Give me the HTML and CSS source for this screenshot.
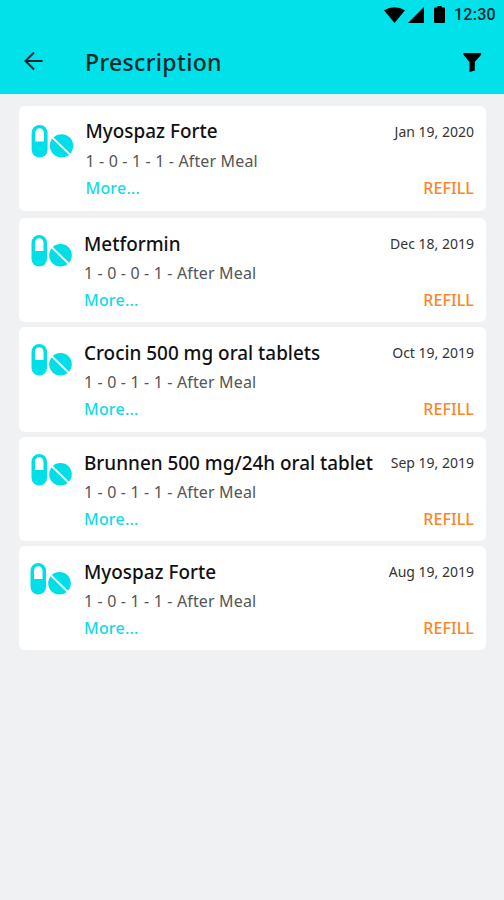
FILE: index.html
```html
<!DOCTYPE html>
<html lang="en">

<head>
    <meta charset="UTF-8" />
    <meta name="viewport" content="width=device-width, initial-scale=1.0" />
    <title>Prescription</title>
    <link rel="stylesheet" href="styles.css">
</head>

<body>
    <svg class="sprite" width="0" height="0">
        <symbol id="pills" viewBox="0 0 41 32">
            <rect x="0.5" y="0" width="15.5" height="31.500" rx="7.700" fill="#00dfe8" />
            <path d="M4 16V7.500a4.200 4.200 0 0 1 8.500 0V16z" fill="#fff" />
            <circle cx="29.500" cy="20.200" r="11.300" fill="#00dfe8" />
            <path d="M20 11.500L38.500 29.500" stroke="#fff" stroke-width="1.800" />
        </symbol>
    </svg>
    <header>
        <div class="status-bar">
            <svg class="wifi" width="21" height="16" viewBox="0 0 21 16">
                <path d="M0 3.3Q10.5-3 21 3.3L10.5 16z" />
            </svg>
            <svg class="signal" width="16" height="16" viewBox="0 0 16 16">
                <path d="M16 0v16H0z" />
            </svg>
            <svg class="battery" width="11" height="17" viewBox="0 0 11 17">
                <path d="M3.3 0h4.4v1.5H10a1 1 0 0 1 1 1V16a1 1 0 0 1-1 1H1a1 1 0 0 1-1-1V2.500a1 1 0 0 1 1-1h2.300z" />
            </svg>
            <span class="clock">12:30</span>
        </div>
        <div class="app-bar">
            <svg class="back" width="19" height="19" viewBox="0 0 19 19">
                <path d="M18.500 9H1.500M10 .5L1.500 9L10 17.500" fill="none" stroke="#07282b" stroke-width="2" />
            </svg>
            <h1>Prescription</h1>
            <svg class="filter" width="20" height="20" viewBox="0 0 20 20">
                <path d="M1.500 1h17.500q.8 1-.3 2.300L12.800 10v8.500L7.500 20V10L1.800 3.300Q.7 2 1.500 1z" />
            </svg>
        </div>
    </header>
    <main class="list">
        <article class="card first">
            <svg class="pills"><use href="#pills" /></svg>
            <div class="info">
                <h2>Myospaz Forte</h2>
                <p class="dose">1 - 0 - 1 - 1 - After Meal</p>
                <a class="more">More...</a>
            </div>
            <div class="side">
                <time>Jan 19, 2020</time>
                <a class="refill">REFILL</a>
            </div>
        </article>
        <article class="card second">
            <svg class="pills"><use href="#pills" /></svg>
            <div class="info">
                <h2>Metformin</h2>
                <p class="dose">1 - 0 - 0 - 1 - After Meal</p>
                <a class="more">More...</a>
            </div>
            <div class="side">
                <time>Dec 18, 2019</time>
                <a class="refill">REFILL</a>
            </div>
        </article>
        <article class="card">
            <svg class="pills"><use href="#pills" /></svg>
            <div class="info">
                <h2>Crocin 500 mg oral tablets</h2>
                <p class="dose">1 - 0 - 1 - 1 - After Meal</p>
                <a class="more">More...</a>
            </div>
            <div class="side">
                <time>Oct 19, 2019</time>
                <a class="refill">REFILL</a>
            </div>
        </article>
        <article class="card">
            <svg class="pills"><use href="#pills" /></svg>
            <div class="info">
                <h2>Brunnen 500 mg/24h oral tablet</h2>
                <p class="dose">1 - 0 - 1 - 1 - After Meal</p>
                <a class="more">More...</a>
            </div>
            <div class="side">
                <time>Sep 19, 2019</time>
                <a class="refill">REFILL</a>
            </div>
        </article>
        <article class="card last">
            <svg class="pills"><use href="#pills" /></svg>
            <div class="info">
                <h2>Myospaz Forte</h2>
                <p class="dose">1 - 0 - 1 - 1 - After Meal</p>
                <a class="more">More...</a>
            </div>
            <div class="side">
                <time>Aug 19, 2019</time>
                <a class="refill">REFILL</a>
            </div>
        </article>
    </main>
</body>

</html>
```
FILE: styles.css
```css
:root {
    --bg: #f0f1f3;
    --accent: #00e1e9;
    --orange: #fb8527;
}

* {
    box-sizing: border-box;
    margin: 0;
    padding: 0;
}

body {
    min-height: 900px;
    font-family: 'Noto Sans', 'Open Sans', sans-serif;
    background: var(--bg);
    color: #111;
}

.sprite {
    display: block;
    height: 0;
}

header {
    height: 94px;
    background: var(--accent);
}

.status-bar {
    display: flex;
    justify-content: flex-end;
    align-items: center;
    height: 29px;
    padding-right: 8px;
}

.signal {
    margin-left: 3px;
}

.battery {
    margin: 0 9px 0 10px;
}

.clock {
    font-family: Roboto, sans-serif;
    font-size: 16px;
    font-weight: 500;
    letter-spacing: 0.3px;
    color: #07282b;
}

.app-bar {
    display: flex;
    align-items: center;
    height: 65px;
    padding: 0 22px 0 24px;
}

h1 {
    flex: 1;
    margin-left: 42px;
    font-size: 23px;
    font-weight: 500;
    letter-spacing: 0.35px;
    color: #07282b;
}

.list {
    display: flex;
    flex-direction: column;
    gap: 5px;
    padding: 12px 18px 0 19px;
}

.card {
    display: flex;
    height: 104.3px;
    padding: 0 12px;
    background: white;
    border-radius: 6px;
}

.first {
    height: 105px;
    margin-bottom: 2px;
}

.pills {
    width: 41px;
    height: 32px;
    margin-top: 17px;
}

.first .pills {
    width: 42.5px;
    height: 33px;
    margin-top: 19px;
}

.last .pills {
    margin-left: -1px;
    margin-right: 1px;
}

.info {
    flex: 1;
    margin-left: 12px;
    white-space: nowrap;
}

h2 {
    margin-top: 12px;
    font-size: 18.9px;
    font-weight: 500;
    line-height: 28px;
}

.first h2 {
    margin-top: 11px;
    margin-bottom: 4px;
}

.dose {
    margin-top: 3px;
    font-size: 16px;
    line-height: 24px;
    letter-spacing: 0.15px;
    color: #555;
}

.more {
    display: block;
    margin-top: 3px;
    font-size: 16px;
    font-weight: 500;
    line-height: 24px;
    letter-spacing: 0.2px;
    color: #12dae3;
}

.side {
    display: flex;
    flex-direction: column;
    align-items: flex-end;
}

time {
    margin-top: 16px;
    font-size: 14px;
    line-height: 20px;
    color: #333;
}

.refill {
    margin-top: 34px;
    font-size: 16px;
    font-weight: 500;
    line-height: 24px;
    letter-spacing: 0.1px;
    color: var(--orange);
}
```
